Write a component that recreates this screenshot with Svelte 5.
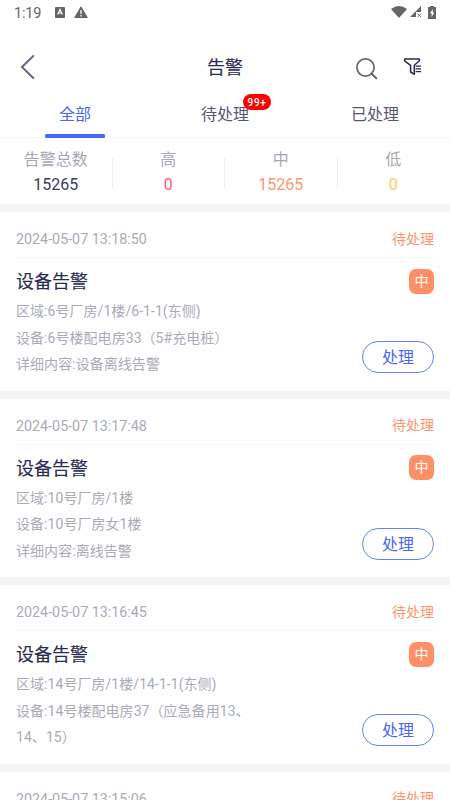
<script>
  const tabs = [
    { label: '全部', active: true },
    { label: '待处理', badge: '99+' },
    { label: '已处理' }
  ];
  const stats = [
    { label: '告警总数', value: '15265', tone: 'dark' },
    { label: '高', value: '0', tone: 'red' },
    { label: '中', value: '15265', tone: 'orange' },
    { label: '低', value: '0', tone: 'yellow' }
  ];
  const alarms = [
    { time: '2024-05-07 13:18:50', lines: ['区域:6号厂房/1楼/6-1-1(东侧)', '设备:6号楼配电房33（5#充电桩）', '详细内容:设备离线告警'] },
    { time: '2024-05-07 13:17:48', lines: ['区域:10号厂房/1楼', '设备:10号厂房女1楼', '详细内容:离线告警'] },
    { time: '2024-05-07 13:16:45', lines: ['区域:14号厂房/1楼/14-1-1(东侧)', '设备:14号楼配电房37（应急备用13、', '14、15）'] },
    { time: '2024-05-07 13:15:06', lines: [] }
  ];
</script>

<div class="screen">
  <div class="status">
    <span class="clock">1:19</span>
    <svg class="abox" width="10" height="11" viewBox="0 0 10 11"><rect width="10" height="11" rx="1" fill="#656565"/><path d="M2.7 7.5 5 2.5 7.3 7.5M3.5 6h3" fill="none" stroke="#fff" stroke-width="1.2"/></svg>
    <svg class="warn" width="14" height="12" viewBox="0 0 14 12"><path d="M7 0 14 12H0z" fill="#656565"/><path d="M7 4v4M7 9v1.5" stroke="#fff" stroke-width="1.3"/></svg>
    <div class="sys">
      <svg width="16" height="12" viewBox="0 0 16 12"><path d="M0 3Q8-3 16 3L8 12z" fill="#656565"/></svg>
      <svg width="12" height="12" viewBox="0 0 12 12"><path d="M11 0v6H6v5H0z" fill="#656565"/><path d="m7.5 7.5 3.5 3.5m0-3.5L7.5 11" stroke="#777" stroke-width="1"/></svg>
      <svg class="bat" width="8" height="13" viewBox="0 0 8 13"><path d="M2 0h4v1h2v12H0V1h2z" fill="#656565"/><path d="M4.8 3 2 7.3h1.6V11L6.3 6.4H4.8z" fill="#fff"/></svg>
    </div>
  </div>

  <header>
    <svg class="back" width="16" height="26" viewBox="0 0 16 26"><path d="M13.3 2 2 13l11.3 11" fill="none" stroke="#686782" stroke-width="2" stroke-linecap="round"/></svg>
    <h1>告警</h1>
    <svg class="search" width="22" height="22" viewBox="0 0 22 22"><circle cx="9.5" cy="9.5" r="8.6" fill="none" stroke="#666" stroke-width="1.7"/><path d="m15.7 15.7 4.5 4.5" stroke="#666" stroke-width="2" stroke-linecap="round"/></svg>
    <svg class="filter" width="19" height="18" viewBox="0 0 19 18"><path d="M1.6 1h14.8v1.8l-5.1 4.5v9L7.6 14V7.3L1.6 2.8z" fill="none" stroke="#292b51" stroke-width="1.5" stroke-linejoin="round"/><path d="M12.6 8.1H18M12.6 10.9H18M12.6 13.6H18" stroke="#292b51" stroke-width="1.3"/></svg>
  </header>

  <nav>
    {#each tabs as tab}
      <div class="tab" class:active={tab.active}>
        <span class="name">{tab.label}{#if tab.badge}<b class="badge">{tab.badge}</b>{/if}</span>
      </div>
    {/each}
  </nav>

  <section class="stats">
    {#each stats as s}
      <div class="stat">
        <span>{s.label}</span>
        <span class={s.tone}>{s.value}</span>
      </div>
    {/each}
  </section>

  {#each alarms as a}
    <article>
      <div class="top"><span class="time">{a.time}</span><span class="state">待处理</span></div>
      <div class="body">
        <div class="info">
          <h2>设备告警</h2>
          {#each a.lines as line}<p>{line}</p>{/each}
        </div>
        <div class="side"><span class="level">中</span><button>处理</button></div>
      </div>
    </article>
  {/each}
</div>

<style>
  :global(body) { margin: 0; background: #fff; overflow: hidden; }
  .screen { width: 450px; height: 800px; overflow: hidden; background: #fff; font-family: Roboto, "Noto Sans CJK SC", sans-serif; color: #292b51; }
  .screen :global(*) { box-sizing: border-box; }
  svg { display: block; flex: none; }
  .status { height: 26px; display: flex; align-items: center; padding: 0 14px; }
  .clock { width: 41px; font-size: 14.5px; color: #656565; letter-spacing: -.15px; }
  .abox { margin-top: -2px; }
  .warn { margin-left: 9px; margin-top: -2px; }
  .sys { margin-left: auto; display: flex; align-items: center; gap: 3px; margin-top: -2px; }
  .bat { margin-left: 3px; }
  header { height: 62px; display: flex; align-items: center; padding: 0 28px 0 20px; margin-top: -2px; }
  .back { margin-top: 24px; }
  h1 { margin: 26px 0 0 171px; font-size: 18px; line-height: 26px; font-weight: 400; -webkit-text-stroke: .15px; flex: 1; }
  .search { margin-top: 27px; margin-right: 25px; }
  .filter { margin-top: 23px; }
  nav { height: 52px; display: flex; border-bottom: 1.5px solid #f6f6f6; }
  .tab { flex: 1; display: flex; justify-content: center; padding-top: 17px; font-size: 16px; line-height: 24px; color: #56576f; position: relative; }
  .name { position: relative; height: 24px; }
  .active { color: #4a66fa; }
  .active::after { content: ""; position: absolute; bottom: -1px; left: 45px; width: 60px; height: 4px; border-radius: 1.5px; background: #4a66fa; }
  .badge { position: absolute; left: 42px; top: -9px; height: 16px; width: 28px; border-radius: 8px; background: #f00; color: #fff; font-size: 10px; line-height: 17px; text-align: center; font-weight: 500; letter-spacing: .6px; }
  .stats { height: 66px; display: flex; }
  .stat { flex: 1; display: flex; flex-direction: column; align-items: center; padding-top: 10px; font-size: 16px; line-height: 24.5px; color: #a6a7b3; padding-right: 1px; position: relative; }
  .stat + .stat::before { content: ""; position: absolute; left: -1px; top: 20px; height: 31px; width: 1px; background: #efeff2; }
  .stat .dark { color: #3b3c5b; }
  .stat .red { color: #fb5878; }
  .stat .orange { color: #ff966e; }
  .stat .yellow { color: #f6cf5b; }
  article { height: 186.5px; border-top: 8.5px solid #f4f4f4; padding: 0 16px; }
  .top { height: 46px; display: flex; justify-content: space-between; align-items: center; padding-top: 6px; border-bottom: 1.5px solid #f8f8f8; font-size: 14px; }
  .time { font-size: 14.3px; padding-top: 3px; color: #aaabb7; }
  .state { color: #ff946d; }
  .body { display: flex; justify-content: space-between; height: 132px; }
  .info { padding-top: 10px; }
  h2 { margin: 0 0 3px; font-size: 18px; line-height: 27px; font-weight: 400; -webkit-text-stroke: .15px; }
  p { margin: 0; font-size: 14px; letter-spacing: .05px; line-height: 26.5px; color: #aaabb7; white-space: nowrap; }
  .side { display: flex; flex-direction: column; align-items: flex-end; }
  .level { margin-top: 10.5px; width: 25px; height: 25px; border-radius: 7px; background: #ff8f66; color: #fff; font-size: 14px; line-height: 25px; text-align: center; }
  button { margin-top: 47.5px; width: 72px; height: 32px; padding: 1px 0 0; border: 1.3px solid #6681ff; border-radius: 16px; background: #fff; color: #4a66fa; font: inherit; font-size: 16px; line-height: 30px; }
</style>
